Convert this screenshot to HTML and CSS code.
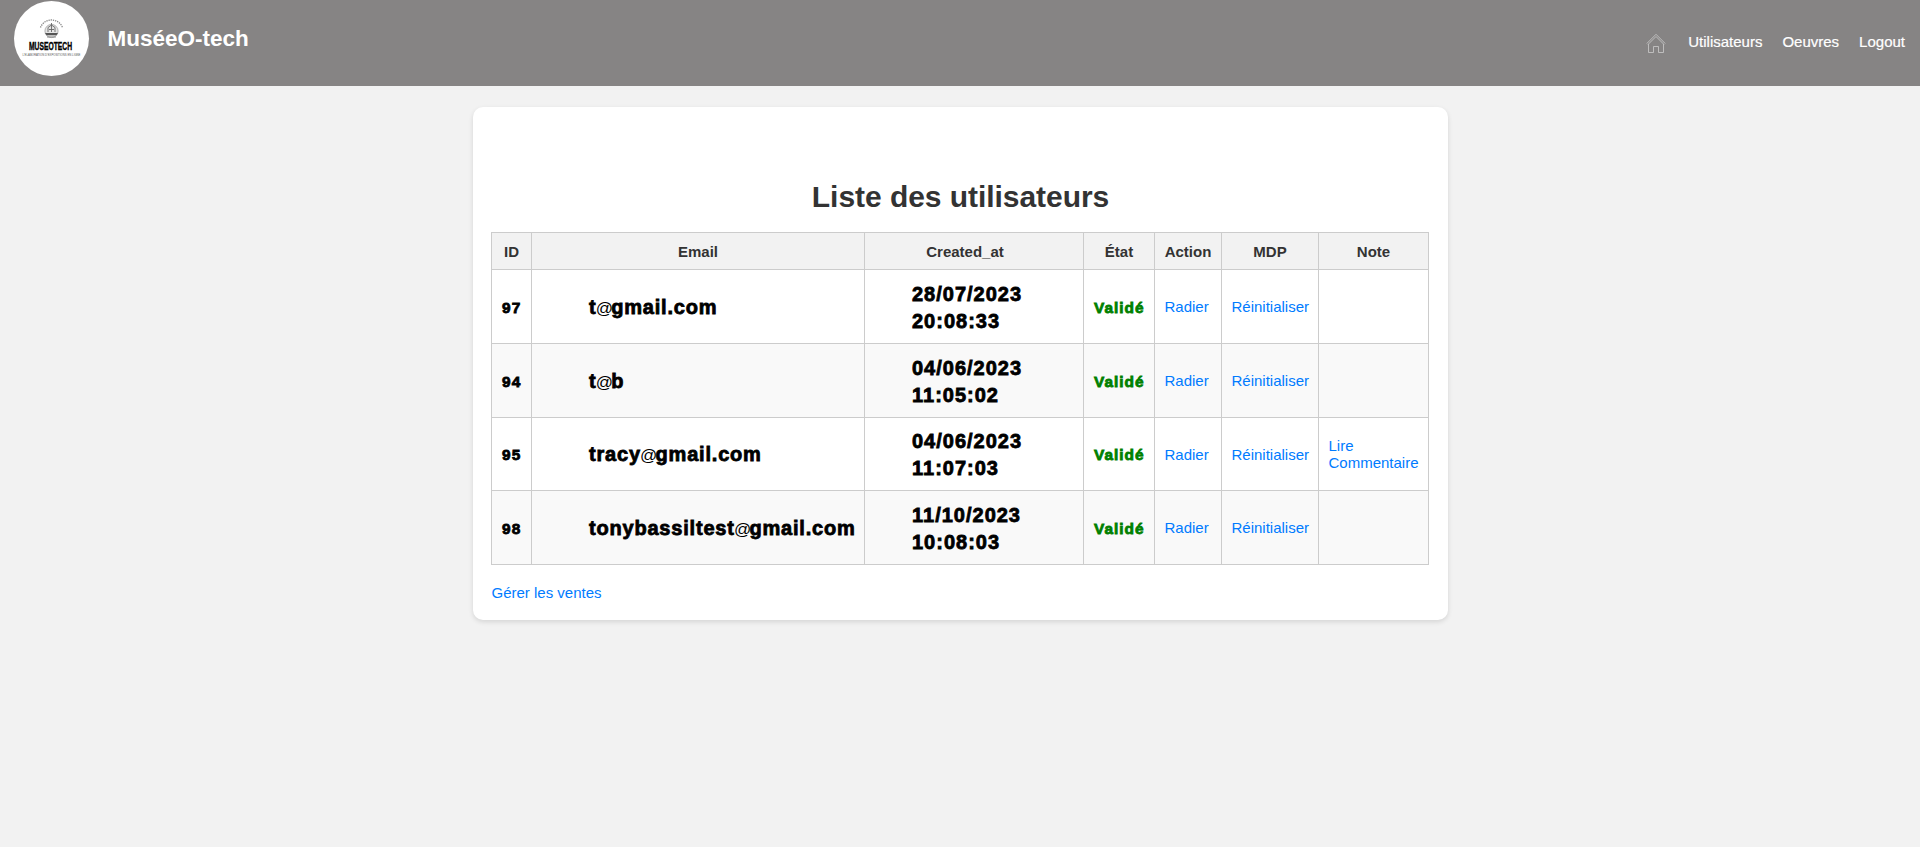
FILE: index.html
```html
<!DOCTYPE html>
<html lang="fr">
<head>
<meta charset="utf-8">
<title>MuséeO-tech</title>
<link rel="stylesheet" href="styles.css">
</head>
<body>
<header class="topbar">
  <svg class="logo" viewBox="0 0 75 75" width="75" height="75">
    <circle cx="37.5" cy="37.5" r="37.5" fill="#fff"/>
    <path d="M26.500 26.500A11.800 11.800 0 0 1 48.500 26.500" fill="none" stroke="#888" stroke-width="1.300" stroke-dasharray="1.300 .9"/>
    <circle cx="37.500" cy="30" r="6.600" fill="#e4e4e4" stroke="#888" stroke-width=".6"/>
    <path d="M31 32h13l-1.500 2.200h-10z" fill="#555"/>
    <path d="M34 31v-4.500l3.500-2.500 3.500 2.500V31M37.500 22v9M35 28.500h5" fill="none" stroke="#666" stroke-width=".9"/>
    <path d="M33 36h9" stroke="#777" stroke-width=".8"/>
    <text class="logo-name" x="15" y="49" textLength="43" lengthAdjust="spacingAndGlyphs">MUSEOTECH</text>
    <text class="logo-tag" x="8.500" y="55" textLength="58" lengthAdjust="spacingAndGlyphs">L'ELABORATION D'EXPOSITIONS EN LIGNE</text>
  </svg>
  <div class="brand">MuséeO-tech</div>
  <nav class="nav">
    <svg class="home" viewBox="0 0 20 20" width="20" height="20" fill="none" stroke="#c4c4c4" stroke-width=".9">
      <path d="M.8 10.500 10 1.300l9.200 9.200M2 11.500l8-8 8 8M2.500 11v8.500h5v-6h5v6h5V11" stroke-linejoin="miter"/>
    </svg>
    <a>Utilisateurs</a>
    <a>Oeuvres</a>
    <a>Logout</a>
  </nav>
</header>
<main class="card">
  <h1 class="title">Liste des utilisateurs</h1>
  <table class="users">
    <colgroup><col class="c-id"><col class="c-email"><col class="c-date"><col class="c-state"><col class="c-action"><col class="c-mdp"><col class="c-note"></colgroup>
    <thead>
      <tr><th>ID</th><th>Email</th><th class="th-date">Created_at</th><th>État</th><th>Action</th><th>MDP</th><th>Note</th></tr>
    </thead>
    <tbody>
      <tr><td class="id">97</td><td class="email">t<span class="at">@</span>gmail.com</td><td class="date">28/07/2023<br>20:08:33</td><td class="state">Validé</td><td><a>Radier</a></td><td><a>Réinitialiser</a></td><td></td></tr>
      <tr><td class="id">94</td><td class="email">t<span class="at">@</span>b</td><td class="date">04/06/2023<br>11:05:02</td><td class="state">Validé</td><td><a>Radier</a></td><td><a>Réinitialiser</a></td><td></td></tr>
      <tr class="short"><td class="id">95</td><td class="email">tracy<span class="at">@</span>gmail.com</td><td class="date">04/06/2023<br>11:07:03</td><td class="state">Validé</td><td><a>Radier</a></td><td><a>Réinitialiser</a></td><td><a>Lire Commentaire</a></td></tr>
      <tr><td class="id">98</td><td class="email">tonybassiltest<span class="at">@</span>gmail.com</td><td class="date">11/10/2023<br>10:08:03</td><td class="state">Validé</td><td><a>Radier</a></td><td><a>Réinitialiser</a></td><td></td></tr>
    </tbody>
  </table>
  <a class="sales">Gérer les ventes</a>
</main>
</body>
</html>
```
FILE: styles.css
```css
* { box-sizing: border-box; }
body {
  margin: 0;
  min-height: 100vh;
  background: #f2f2f2;
  font: 15px/17px "Liberation Sans", Arial, sans-serif;
}
.topbar {
  display: flex;
  align-items: flex-start;
  height: 86px;
  padding: 1px 15px 0 14px;
  background: #868484;
  color: #fff;
}
.logo { flex: none; overflow: visible; }
.logo-name { font: bold 11px "Liberation Sans", Arial, sans-serif; fill: #000; stroke: #000; stroke-width: .4px; }
.logo-tag { font: 2.6px "Liberation Sans", Arial, sans-serif; fill: #555; }
.brand {
  margin: 25px 0 0 18.5px;
  font-size: 22.5px;
  line-height: 26px;
  font-weight: bold;
}
.nav {
  display: flex;
  gap: 20px;
  margin: 32px 0 0 auto;
  -webkit-text-stroke: .2px #fff;
}
.home { margin-right: 2px; }
.card {
  width: 975px;
  height: 513px;
  margin: 21px 0 0 473px;
  padding: 73px 18px 0;
  background: #fff;
  border-radius: 10px;
  box-shadow: 0 2px 5px rgba(0, 0, 0, .12);
}
.title {
  margin: 0 0 18px;
  color: #333;
  font-size: 30px;
  line-height: 34px;
  letter-spacing: -.05px;
  text-align: center;
}
.users {
  width: 938px;
  table-layout: fixed;
  border-collapse: collapse;
}
.c-id { width: 40px; }
.c-email { width: 333px; }
.c-date { width: 219px; }
.c-state { width: 71px; }
.c-action { width: 67px; }
.c-mdp { width: 97px; }
.c-note { width: 110px; }
.users th, .users td { border: 1px solid #ccc; }
.users th {
  height: 37px;
  padding: 1px 0 0;
  background: #f2f2f2;
  color: #333;
}
.users .th-date { padding-right: 18px; }
.users td {
  height: 74px;
  padding: 0 0 0 9.5px;
}
.users .short td { height: 73px; }
.users tbody tr:nth-child(even) { background: #f9f9f9; }
.users a, .sales { color: #007bff; }
.users .id, .users .email, .users .date, .users .state {
  font-weight: bold;
  color: #000;
  -webkit-text-stroke: .8px currentColor;
}
.users .id, .users .state {
  font-size: 15.4px;
  padding: 1px 0 0 10px;
}
.users .id { letter-spacing: 1.3px; }
.users .state { color: green; letter-spacing: 1px; }
.users .email, .users .date {
  font-size: 20px;
  line-height: 27px;
  white-space: nowrap;
}
.users .email { padding: 2px 0 0 57px; letter-spacing: .8px; }
.users .date { padding: 2px 0 0 47px; letter-spacing: 1px; }
.users .at {
  font-size: 17px;
  font-weight: normal;
  letter-spacing: -2.5px;
  margin: 0 .8px 0 -.8px;
  -webkit-text-stroke: 0;
}
.sales { display: block; margin: 19px 0 0 .5px; }
```
